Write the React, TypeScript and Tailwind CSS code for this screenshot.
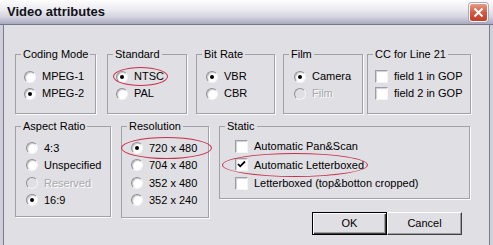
import React from 'react';

type Opt = { label: string; checked?: boolean; disabled?: boolean };

const Radio = ({ checked, disabled }: { checked?: boolean; disabled?: boolean }) => (
  <span
    className={`flex h-[12px] w-[12px] shrink-0 items-center justify-center rounded-full border border-t-[#8e8e96] border-l-[#8e8e96] border-r-[#f4f4f6] border-b-[#f4f4f6] ${
      disabled ? 'bg-[#e0dfe3]' : 'bg-white shadow-[inset_1px_1px_1px_#c4c4c8]'
    }`}
  >
    {checked && <span className="h-[4px] w-[4px] rounded-full bg-black" />}
  </span>
);

const Check = ({ checked }: { checked?: boolean }) => (
  <span className="flex h-[13px] w-[13px] shrink-0 items-center justify-center border border-t-[#9c9ca4] border-l-[#9c9ca4] border-r-[#f4f4f6] border-b-[#f4f4f6] bg-white shadow-[inset_1px_1px_1px_#cfcfd4]">
    {checked && (
      <svg width="9" height="9" viewBox="0 0 9 9">
        <path d="M1 4 L3.2 6.3 L8 1.5" fill="none" stroke="#000" strokeWidth="1.8" />
      </svg>
    )}
  </span>
);

// red hand-drawn style ellipse laid over an option
const Ring = ({ className }: { className: string }) => (
  <span className={`pointer-events-none absolute rounded-[50%] border-[1.5px] border-[#c8304c] ${className}`} />
);

const Group = ({
  title,
  className,
  inner,
  children,
}: {
  title: string;
  className: string;
  inner: string;
  children: React.ReactNode;
}) => (
  <fieldset className={`shrink-0 border border-[#a2a1a9] shadow-[1px_1px_0_#fbfbfc] ${className}`}>
    <legend className="ml-[5px] whitespace-nowrap px-[2px] leading-[13px]">{title}</legend>
    <div className={inner}>{children}</div>
  </fieldset>
);

const Item = ({
  opt,
  type,
  h,
  ring,
}: {
  opt: Opt;
  type: 'radio' | 'check';
  h: string;
  ring?: string;
}) => (
  <div className={`relative flex items-center gap-[6px] ${h}`}>
    {type === 'radio' ? <Radio checked={opt.checked} disabled={opt.disabled} /> : <Check checked={opt.checked} />}
    <span className={`whitespace-nowrap ${opt.disabled ? 'text-[#a9a8ae] [text-shadow:1px_1px_0_#fff]' : ''}`}>
      {opt.label}
    </span>
    {ring && <Ring className={ring} />}
  </div>
);

export default function App() {
  return (
    <div className="h-[245px] w-[493px] overflow-hidden rounded-t-[7px] bg-[#cfcfdb] font-['Liberation_Sans',Arial,sans-serif] text-[11px] text-black">
      {/* Title bar */}
      <div className="flex h-[25px] items-center justify-between border-b border-[#74748c] bg-[linear-gradient(to_bottom,#fefefe_0%,#eeeef3_35%,#d4d4e0_70%,#a9a9c0_100%)] pl-[7px] pr-[5px]">
        <span className="text-[13px] font-bold text-[#111118]">Video attributes</span>
        <span className="flex h-[19px] w-[19px] items-center justify-center rounded-[3px] border border-white bg-[linear-gradient(to_bottom,#e89a86,#d2553c_55%,#c0402a)] shadow-[0_0_0_1px_#b0a8b8]">
          <svg width="11" height="11" viewBox="0 0 11 11">
            <path d="M1.5 1.5 L9.5 9.5 M9.5 1.5 L1.5 9.5" stroke="#fff" strokeWidth="2" />
          </svg>
        </span>
      </div>

      {/* Body */}
      <div className="mx-[3px] h-[220px] border-x border-[#7c7c8e] bg-[#e0dfe3] pl-[11px] pt-[23px]">
        <div className="flex">
          <Group title="Coding Mode" className="h-[66px] w-[81px]" inner="pl-[8px] pt-[7px]">
            <Item type="radio" h="h-[17px]" opt={{ label: 'MPEG-1' }} />
            <Item type="radio" h="h-[17px]" opt={{ label: 'MPEG-2', checked: true }} />
          </Group>
          <Group title="Standard" className="ml-[11px] h-[66px] w-[80px]" inner="pl-[8px] pt-[7px]">
            <Item type="radio" h="h-[17px]" opt={{ label: 'NTSC', checked: true }} ring="-left-[3px] -top-[1px] h-[19px] w-[55px]" />
            <Item type="radio" h="h-[17px]" opt={{ label: 'PAL' }} />
          </Group>
          <Group title="Bit Rate" className="ml-[9px] h-[66px] w-[79px]" inner="pl-[9px] pt-[7px]">
            <Item type="radio" h="h-[17px]" opt={{ label: 'VBR', checked: true }} />
            <Item type="radio" h="h-[17px]" opt={{ label: 'CBR' }} />
          </Group>
          <Group title="Film" className="ml-[8px] h-[66px] w-[80px]" inner="pl-[10px] pt-[7px]">
            <Item type="radio" h="h-[17px]" opt={{ label: 'Camera', checked: true }} />
            <Item type="radio" h="h-[17px]" opt={{ label: 'Film', disabled: true }} />
          </Group>
          <Group title="CC for Line 21" className="ml-[4px] h-[66px] w-[104px]" inner="pl-[7px] pt-[7px]">
            <Item type="check" h="h-[17px]" opt={{ label: 'field 1 in GOP' }} />
            <Item type="check" h="h-[17px]" opt={{ label: 'field 2 in GOP' }} />
          </Group>
        </div>

        <div className="mt-[6px] flex items-start">
          <Group title="Aspect Ratio" className="h-[97px] w-[96px]" inner="pl-[10px] pt-[6px]">
            <Item type="radio" h="h-[17.5px]" opt={{ label: '4:3' }} />
            <Item type="radio" h="h-[17.5px]" opt={{ label: 'Unspecified' }} />
            <Item type="radio" h="h-[17.5px]" opt={{ label: 'Reserved', disabled: true }} />
            <Item type="radio" h="h-[17.5px]" opt={{ label: '16:9', checked: true }} />
          </Group>
          <Group title="Resolution" className="ml-[10px] h-[98px] w-[88px]" inner="pl-[9px] pt-[6px]">
            <Item type="radio" h="h-[17.5px]" opt={{ label: '720 x 480', checked: true }} ring="-left-[10px] -top-[2px] h-[22px] w-[91px]" />
            <Item type="radio" h="h-[17.5px]" opt={{ label: '704 x 480' }} />
            <Item type="radio" h="h-[17.5px]" opt={{ label: '352 x 480' }} />
            <Item type="radio" h="h-[17.5px]" opt={{ label: '352 x 240' }} />
          </Group>
          <div className="ml-[10px] flex flex-col">
            <Group title="Static" className="h-[79px] w-[251px]" inner="pl-[15px] pt-[4px]">
              <Item type="check" h="h-[18.5px]" opt={{ label: 'Automatic Pan&Scan' }} />
              <Item type="check" h="h-[18.5px]" opt={{ label: 'Automatic Letterboxed', checked: true }} ring="-left-[13px] -top-[3px] h-[24px] w-[146px]" />
              <Item type="check" h="h-[18.5px]" opt={{ label: 'Letterboxed (top&botton cropped)' }} />
            </Group>
            <div className="mt-[13px] flex justify-end pr-[8px]">
              <button className="h-[23px] w-[75px] border border-black bg-[#e0dfe3] shadow-[inset_1px_1px_0_#fff,inset_-1px_-1px_0_#404040,inset_-2px_-2px_0_#a0a0a4]">
                OK
              </button>
              <button className="h-[23px] w-[75px] border border-t-white border-l-white border-r-[#404040] border-b-[#404040] bg-[#e0dfe3] shadow-[inset_-1px_-1px_0_#a0a0a4]">
                Cancel
              </button>
            </div>
          </div>
        </div>
      </div>
    </div>
  );
}
